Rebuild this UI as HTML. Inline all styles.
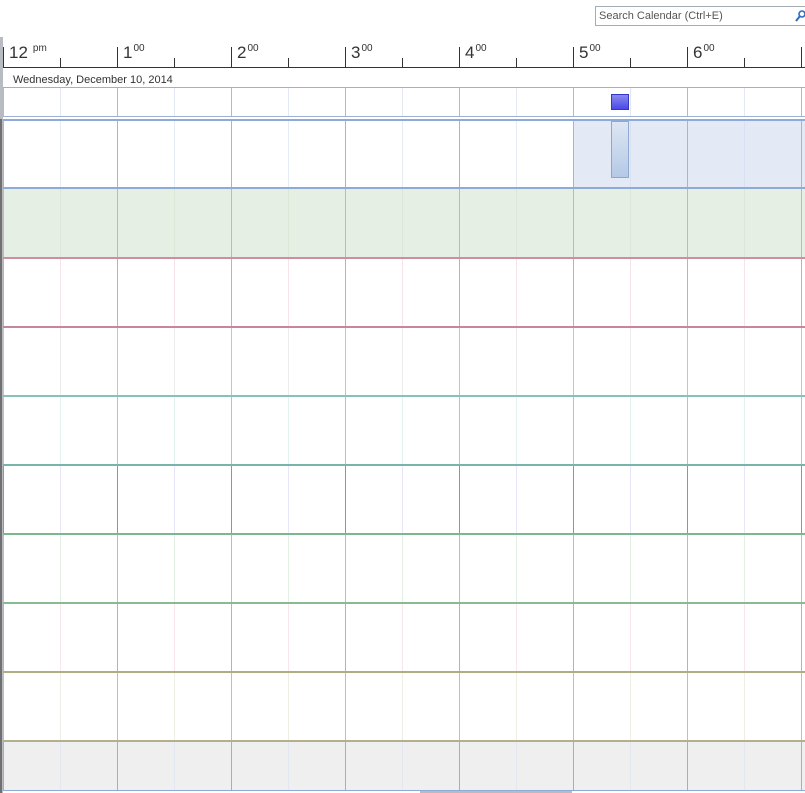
<!DOCTYPE html>
<html><head><style>
body{margin:0;width:805px;height:793px;overflow:hidden;background:#fff;font-family:"Liberation Sans",sans-serif;position:relative}
.a{position:absolute}
.row{position:absolute;left:3px;width:802px;height:69px}
.h{position:absolute;top:43px;font-size:17px;color:#333}
.h sup{font-size:10px;vertical-align:7px;margin-left:1px}
</style></head><body>
<!-- search -->
<div class="a" style="left:595px;top:6px;width:212px;height:20px;border:1px solid #a5acb5;box-sizing:border-box;color:#555;padding:3px 0 0 3px;font-size:11px">Search Calendar (Ctrl+E)</div>
<svg class="a" style="left:795px;top:9px" width="10" height="14"><circle cx="7" cy="5" r="3" fill="none" stroke="#2b6cc4" stroke-width="1.6"/><line x1="5" y1="7" x2="1" y2="12" stroke="#2b6cc4" stroke-width="2"/></svg>
<!-- left bars -->
<div class="a" style="left:0;top:37px;width:3px;height:756px;background:#b8bcc2"></div>
<div class="a" style="left:0;top:119px;width:2px;height:674px;background:#707070"></div>
<!-- header ticks -->
<div class="a" style="left:3px;top:67px;width:802px;height:1px;background:#333"></div>
<div class="a" style="left:3px;top:47px;width:802px;height:21px;background:repeating-linear-gradient(to right,#333 0 1px,transparent 1px 114px)"></div>
<div class="a" style="left:60px;top:58px;width:745px;height:10px;background:repeating-linear-gradient(to right,#333 0 1px,transparent 1px 114px)"></div>
<div class="h" style="left:9px">12<sup style="margin-left:5px">pm</sup></div>
<div class="h" style="left:123px">1<sup>00</sup></div>
<div class="h" style="left:237px">2<sup>00</sup></div>
<div class="h" style="left:351px">3<sup>00</sup></div>
<div class="h" style="left:465px">4<sup>00</sup></div>
<div class="h" style="left:579px">5<sup>00</sup></div>
<div class="h" style="left:693px">6<sup>00</sup></div>
<div class="a" style="left:13px;top:74px;font-size:11px;color:#333">Wednesday, December 10, 2014</div>
<!-- all day row -->
<div class="a" style="left:3px;top:87px;width:802px;height:30px;border-top:1px solid #9ab0d4;border-bottom:1px solid #9ab0d4;box-sizing:border-box;background:repeating-linear-gradient(to right,#a8bcd8 0 1px,transparent 1px 57px,#e3e9f3 57px 58px,transparent 58px 114px)"></div>
<div class="a" style="left:611px;top:94px;width:18px;height:16px;background:linear-gradient(#8a8af0,#4a4ae8);border:1px solid #3535c8;box-sizing:border-box"></div>
<!-- rows -->
<div class="row" style="top:119px;border-top:2px solid #8eaadb;border-bottom:1px solid #8eaadb;box-sizing:border-box;background:repeating-linear-gradient(to right,#a3b6d6 0 1px,transparent 1px 57px,#e6ecf5 57px 58px,transparent 58px 114px)"></div>
<div class="a" style="left:574px;top:121px;width:231px;height:66px;background:repeating-linear-gradient(to right,transparent 0 113px,#a3b6d6 113px 114px) ,rgba(200,213,238,0.5)"></div>
<div class="a" style="left:611px;top:121px;width:18px;height:57px;background:linear-gradient(#dde6f3,#b5c9e6);border:1px solid #8ea8d0;box-sizing:border-box"></div>
<div class="row" style="top:188px;border-top:1px solid #8eaadb;background:#e6efe3 repeating-linear-gradient(to right,#adc6a2 0 1px,transparent 1px 57px,#dbe6d6 57px 58px,transparent 58px 114px);box-sizing:border-box"></div>
<div class="row" style="top:257px;border-top:2px solid #d08ca0;box-sizing:border-box;background:repeating-linear-gradient(to right,#d6a4b2 0 1px,transparent 1px 57px,#f6e4ea 57px 58px,transparent 58px 114px)"></div>
<div class="row" style="top:326px;border-top:2px solid #c8869a;box-sizing:border-box;background:repeating-linear-gradient(to right,#c4c4c4 0 1px,transparent 1px 57px,#ececec 57px 58px,transparent 58px 114px)"></div>
<div class="row" style="top:395px;border-top:2px solid #88c0bc;box-sizing:border-box;background:repeating-linear-gradient(to right,#a0cccc 0 1px,transparent 1px 57px,#e2f2ee 57px 58px,transparent 58px 114px)"></div>
<div class="row" style="top:464px;border-top:2px solid #78b4a8;box-sizing:border-box;background:repeating-linear-gradient(to right,#8c8cd0 0 1px,transparent 1px 57px,#e6e6fa 57px 58px,transparent 58px 114px)"></div>
<div class="row" style="top:533px;border-top:2px solid #7cb88e;box-sizing:border-box;background:repeating-linear-gradient(to right,#a4cca8 0 1px,transparent 1px 57px,#e2f0e6 57px 58px,transparent 58px 114px)"></div>
<div class="row" style="top:602px;border-top:2px solid #88bc90;box-sizing:border-box;background:repeating-linear-gradient(to right,#d8a4ac 0 1px,transparent 1px 57px,#f8e6ea 57px 58px,transparent 58px 114px)"></div>
<div class="row" style="top:671px;border-top:2px solid #b0ae80;box-sizing:border-box;background:repeating-linear-gradient(to right,#c2c29e 0 1px,transparent 1px 57px,#eeeee2 57px 58px,transparent 58px 114px)"></div>
<div class="row" style="top:740px;height:51px;border-top:2px solid #b4b08c;border-bottom:1px solid #8eaadb;box-sizing:border-box;background:#efefef repeating-linear-gradient(to right,#94b0e0 0 1px,transparent 1px 57px,#e2e8f2 57px 58px,transparent 58px 114px)"></div>
<div class="a" style="left:420px;top:791px;width:152px;height:2px;background:#bbb"></div>
</body></html>
